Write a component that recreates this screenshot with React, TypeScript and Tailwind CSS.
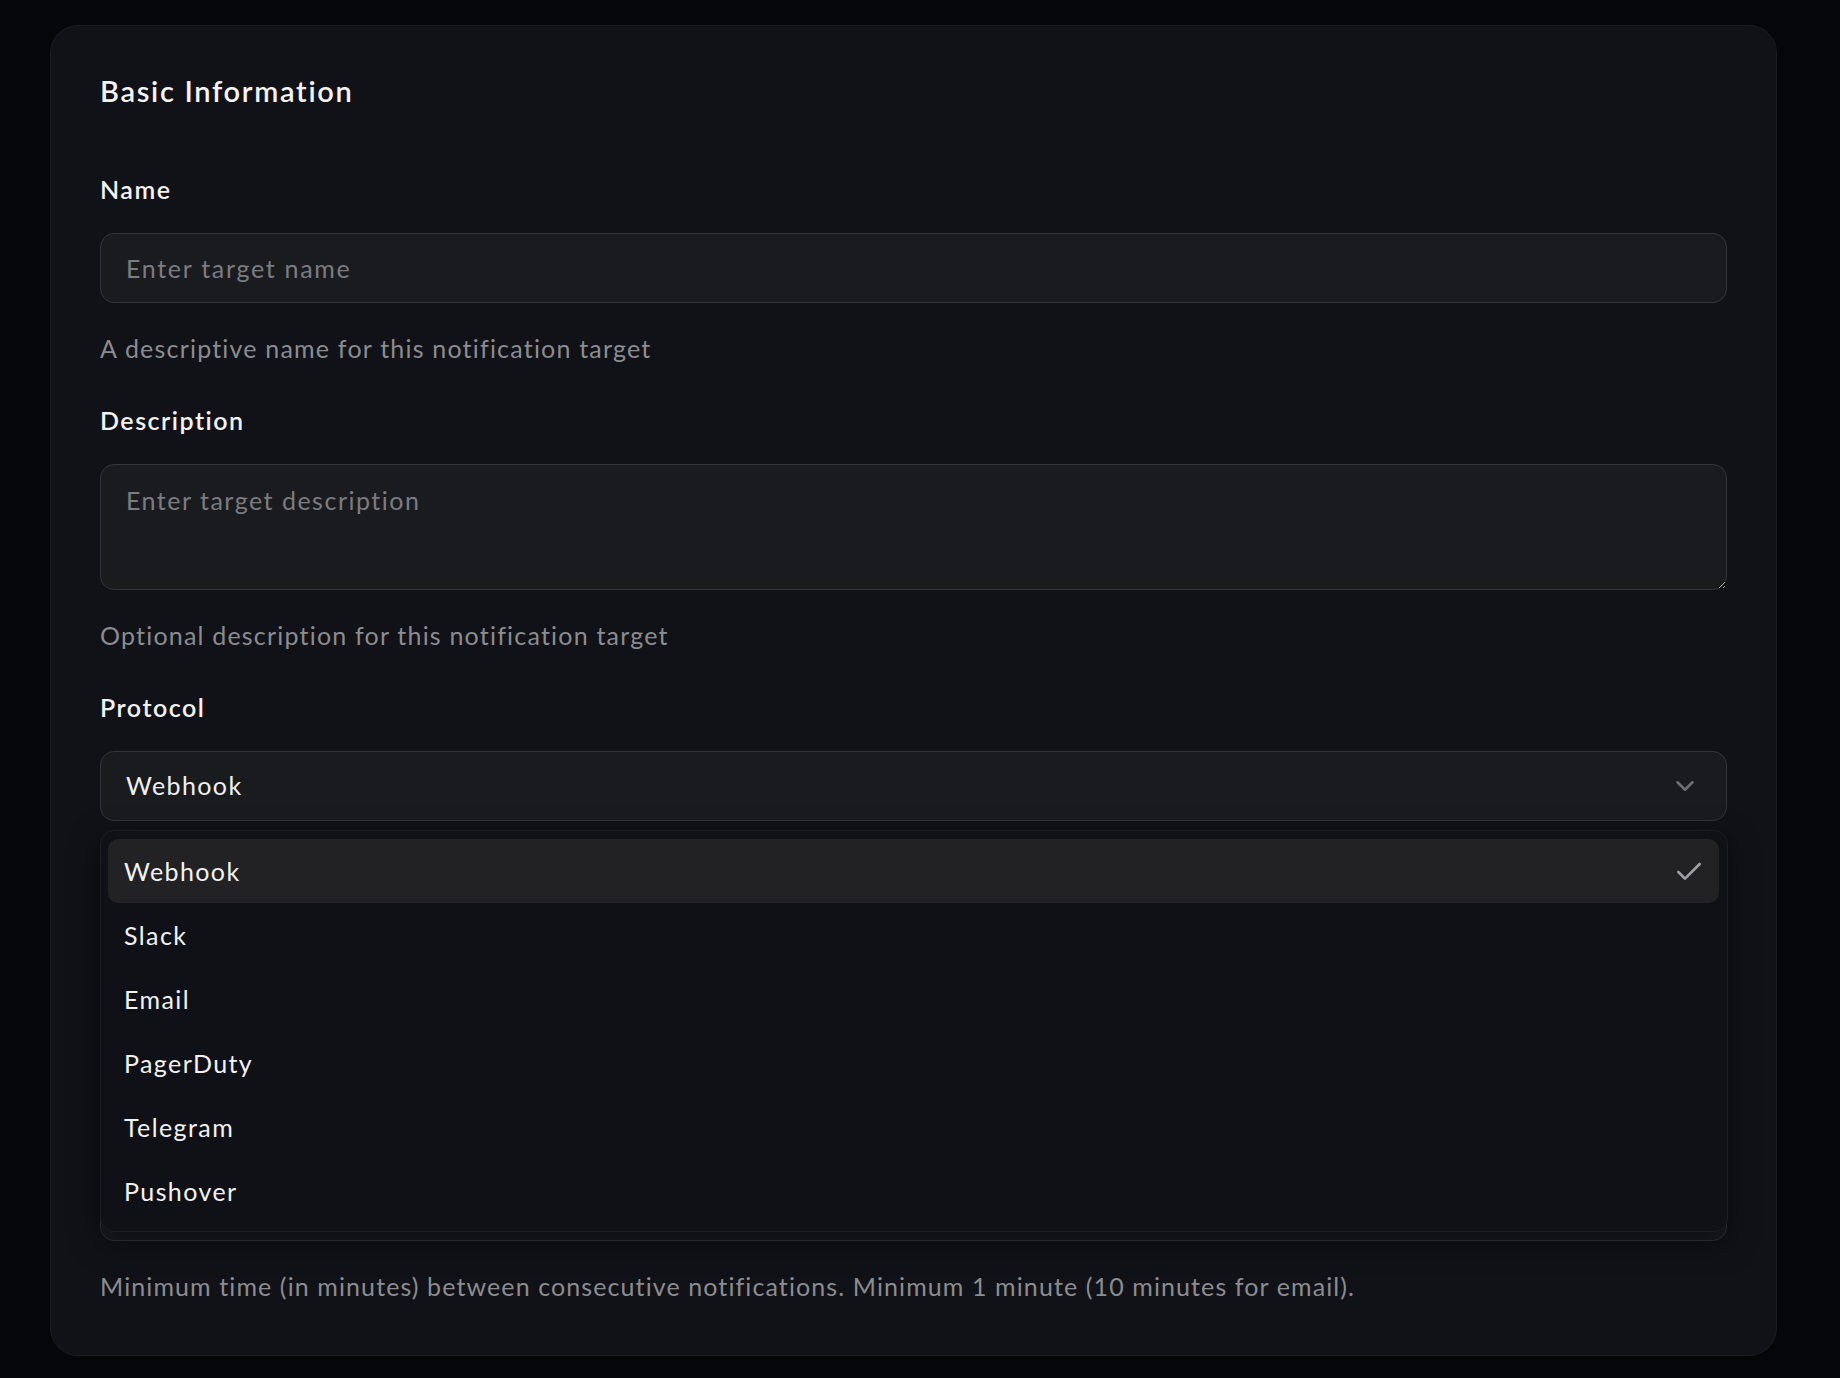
import React from "react";
import { Check, ChevronDown } from "lucide-react";

const protocols = ["Webhook", "Slack", "Email", "PagerDuty", "Telegram", "Pushover"];

const inputCls =
  "block w-full h-[70px] rounded-[14px] border border-[#34353a] bg-[#1a1b1f] px-[25px] text-[25px] tracking-[1.7px] text-[#f0f0f0] placeholder:text-[#7b7c81] outline-none";

function Label({ children }: { children: React.ReactNode }) {
  return (
    <label className="block text-[25px] leading-[30px] font-semibold tracking-[1.5px] text-[#f2f2f3] mb-[29px]">
      {children}
    </label>
  );
}

function Help({ children }: { children: React.ReactNode }) {
  return <p className="mt-[30px] text-[25px] leading-[30px] tracking-[1.2px] text-[#8b8c90]">{children}</p>;
}

export default function App() {
  const selected = "Webhook";

  return (
    <div
      className="min-h-screen bg-[#05060a] pt-[25px] pb-[21px] pl-[50px] pr-[63px]"
      style={{ fontFamily: "Lato, 'Noto Sans', sans-serif" }}
    >
      <div className="rounded-[28px] border border-[#1c1d22] bg-[#111217] px-[49px] pt-[47px] pb-[54px]">
        <h2 className="text-[29px] leading-[36px] font-semibold tracking-[1.7px] text-[#f4f4f5]">Basic Information</h2>

        <div className="mt-[65px]">
          <Label>Name</Label>
          <input className={inputCls} placeholder="Enter target name" />
          <Help>A descriptive name for this notification target</Help>
        </div>

        <div className="mt-[42px]">
          <Label>Description</Label>
          <textarea
            className="block w-full h-[126px] resize-y rounded-[14px] border border-[#34353a] bg-[#1a1b1f] px-[25px] pt-[18px] text-[25px] leading-[34px] tracking-[1.5px] text-[#f0f0f0] placeholder:text-[#7b7c81] outline-none [color-scheme:dark]"
            placeholder="Enter target description"
          />
          <Help>Optional description for this notification target</Help>
        </div>

        <div className="mt-[42px]">
          <Label>Protocol</Label>
          <div className="relative">
            <button className="flex w-full h-[70px] items-center justify-between rounded-[14px] border border-[#34353a] bg-[#1a1b1f] pl-[25px] pr-[26px] text-[25px] tracking-[1.4px] text-[#f0f0f0]">
              <span>{selected}</span>
              <ChevronDown size={30} strokeWidth={2} className="text-[#6e6f74]" />
            </button>

            {/* open select menu */}
            <div className="absolute left-0 right-[-1px] top-[calc(100%+9px)] z-10 rounded-[14px] border border-[#1d1e23] bg-[#101116] pt-[8px] pb-[8px] pl-[7px] pr-[8px] shadow-[0_10px_30px_rgba(0,0,0,0.5)]">
              {protocols.map((p) => (
                <div
                  key={p}
                  className={`flex h-[64px] items-center justify-between rounded-[10px] pl-[16px] pr-[14px] pt-[2px] text-[25px] tracking-[1.4px] text-[#f2f2f3] ${
                    p === selected ? "bg-[#222224]" : ""
                  }`}
                >
                  <span>{p}</span>
                  {p === selected && <Check size={32} strokeWidth={2} className="text-[#a0a0a4]" />}
                </div>
              ))}
            </div>
          </div>
        </div>

        {/* fields hidden behind the open menu */}
        <div className="mt-[350px]">
          <input className={inputCls} aria-label="Cooldown" />
          <p className="mt-[30px] text-[25px] leading-[30px] tracking-[1.1px] text-[#8b8c90]">
            Minimum time (in minutes) between consecutive notifications. Minimum 1 minute (10 minutes for email).
          </p>
        </div>
      </div>
    </div>
  );
}
